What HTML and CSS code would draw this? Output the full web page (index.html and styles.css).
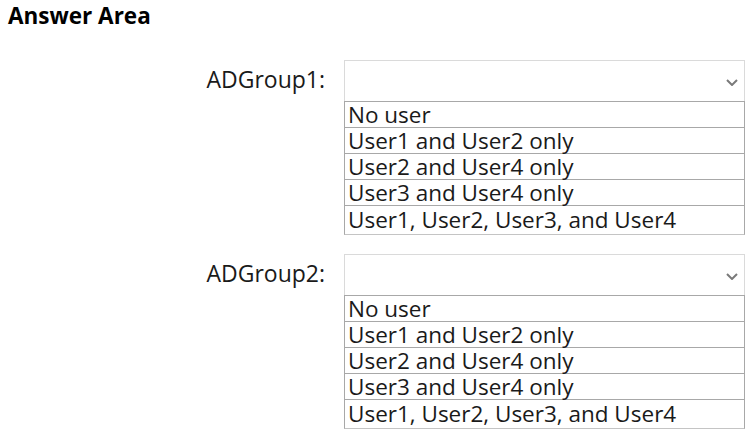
FILE: index.html
```html
<!DOCTYPE html>
<html lang="en">
<head>
    <meta charset="UTF-8">
    <meta name="viewport" content="width=device-width, initial-scale=1.0">
    <title>Answer Area</title>
    <link rel="stylesheet" href="styles.css">
</head>
<body>

    <div class="answer-area">
        <h1 class="title">Answer Area</h1>

        <div class="question">
            <span class="label">ADGroup1:</span>
            <div class="dropdown">
                <div class="select-box">
                    <svg class="chevron" width="12" height="7" viewBox="0 0 12 7">
                        <polyline points="1,1 6,6 11,1" fill="none" stroke="#7a7a7a" stroke-width="2"/>
                    </svg>
                </div>
                <ul class="options">
                    <li>No user</li>
                    <li>User1 and User2 only</li>
                    <li>User2 and User4 only</li>
                    <li>User3 and User4 only</li>
                    <li>User1, User2, User3, and User4</li>
                </ul>
            </div>
        </div>

        <div class="question">
            <span class="label">ADGroup2:</span>
            <div class="dropdown">
                <div class="select-box">
                    <svg class="chevron" width="12" height="7" viewBox="0 0 12 7">
                        <polyline points="1,1 6,6 11,1" fill="none" stroke="#7a7a7a" stroke-width="2"/>
                    </svg>
                </div>
                <ul class="options">
                    <li>No user</li>
                    <li>User1 and User2 only</li>
                    <li>User2 and User4 only</li>
                    <li>User3 and User4 only</li>
                    <li>User1, User2, User3, and User4</li>
                </ul>
            </div>
        </div>
    </div>

</body>
</html>
```

FILE: styles.css
```css
body {
    margin: 0;
    background-color: #ffffff;
    color: #1a1a1a;
    font-family: "Open Sans", "Noto Sans", sans-serif;
}

.answer-area {
    display: flex;
    flex-direction: column;
    gap: 19px;
    padding: 0 5px 0 0;
}

.title {
    margin: 0 0 10px 8px;
    font-size: 22.5px;
    line-height: 31px;
    font-weight: 700;
    color: #000;
}

.question {
    display: grid;
    grid-template-columns: 325px 401px;
    column-gap: 19px;
    align-items: start;
}

.label {
    text-align: right;
    font-size: 23px;
    line-height: 28px;
    padding-top: 5px;
}

.select-box {
    height: 40px;
    border: 1px solid #dadada;
    border-bottom: none;
    display: flex;
    justify-content: flex-end;
    align-items: center;
    padding-right: 6px;
}

.chevron {
    margin-top: 3px;
}

.options {
    list-style: none;
    margin: 0;
    padding: 0;
    border: 1px solid #a8a8a8;
    border-bottom-color: #c4c4c4;
}

    .options li {
        box-sizing: border-box;
        height: 26px;
        line-height: 25px;
        padding-left: 3px;
        font-size: 22.5px;
        white-space: nowrap;
        border-bottom: 1px solid #a8a8a8;
    }

    .options li:last-child {
        border-bottom: none;
        height: 28px;
        line-height: 27px;
    }
```
